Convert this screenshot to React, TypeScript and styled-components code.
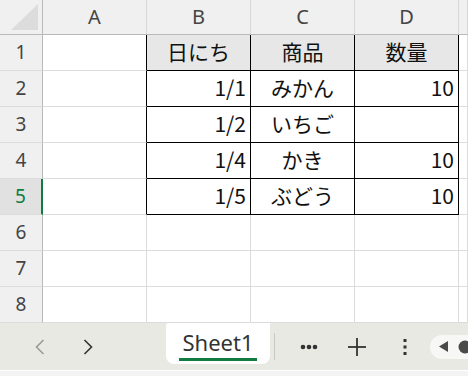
import styled, { createGlobalStyle } from "styled-components";

const GlobalStyle = createGlobalStyle`
  html, body {
    margin: 0;
    padding: 0;
    background: #ffffff;
    overflow: hidden;
  }
  body {
    width: 468px;
    height: 376px;
    font-family: "Noto Sans CJK JP", "Noto Sans", sans-serif;
  }
`;

const Root = styled.div`
  width: 468px;
  height: 376px;
  display: flex;
  flex-direction: column;
  overflow: hidden;
`;

const Grid = styled.div`
  display: grid;
  grid-template-columns: 43px repeat(4, 104px) 1fr;
  grid-template-rows: 35px repeat(8, 36px);
`;

const HeaderCell = styled.div<{ $selected?: boolean }>`
  box-sizing: border-box;
  display: flex;
  align-items: center;
  justify-content: center;
  background: ${(p) => (p.$selected ? "#e1e1e1" : "#f0f0f0")};
  border-right: 1px solid #d6d6d6;
  border-bottom: 1px solid #b9b9b9;
  color: #444444;
  font-family: "Noto Sans", "Liberation Sans", sans-serif;
  font-size: 20px;
  padding-bottom: 2px;
`;

const RowHead = styled.div<{ $selected?: boolean }>`
  box-sizing: border-box;
  display: flex;
  align-items: center;
  justify-content: center;
  background: ${(p) => (p.$selected ? "#e1e1e1" : "#f0f0f0")};
  border-right: ${(p) => (p.$selected ? "2px solid #107c41" : "1px solid #b9b9b9")};
  border-bottom: 1px solid #dcdcdc;
  color: ${(p) => (p.$selected ? "#107c41" : "#444444")};
  font-family: "Noto Sans", "Liberation Sans", sans-serif;
  font-size: 19px;
  padding-bottom: 2px;
`;

const Corner = styled(HeaderCell)`
  border-right: 1px solid #b9b9b9;
  padding: 0;
`;

const Cell = styled.div<{
  $align?: "left" | "center" | "right";
  $fill?: string;
  $right?: string;
  $bottom?: string;
}>`
  box-sizing: border-box;
  display: flex;
  align-items: center;
  justify-content: ${(p) =>
    p.$align === "right" ? "flex-end" : p.$align === "center" ? "center" : "flex-start"};
  padding: 0 4px 3px 4px;
  background: ${(p) => p.$fill || "#ffffff"};
  border-right: 1px solid ${(p) => p.$right || "#dcdcdc"};
  border-bottom: 1px solid ${(p) => p.$bottom || "#dcdcdc"};
  color: #111111;
  font-size: 21px;
  white-space: nowrap;
`;

const TabBar = styled.div`
  display: flex;
  align-items: center;
  height: 47px;
  padding-left: 16px;
  background: #e9e9e3;
`;

const IconButton = styled.div<{ $color?: string }>`
  width: 48px;
  height: 47px;
  display: flex;
  align-items: center;
  justify-content: center;
  color: ${(p) => p.$color || "#333333"};
  flex-shrink: 0;
`;

const SheetTab = styled.div`
  align-self: flex-start;
  box-sizing: border-box;
  width: 104px;
  height: 41px;
  margin-left: 54px;
  background: #ffffff;
  border-radius: 3px 0 8px 8px;
  display: flex;
  flex-direction: column;
  align-items: center;
  padding-top: 5px;
  flex-shrink: 0;
`;

const TabLabel = styled.span`
  font-family: "Noto Sans", "Open Sans", sans-serif;
  font-size: 22px;
  line-height: 28px;
  color: #333333;
`;

const TabUnderline = styled.span`
  display: block;
  width: 78px;
  height: 3px;
  margin-top: 2px;
  background: #107c41;
`;

const Divider = styled.div`
  width: 1px;
  height: 27px;
  margin: 0 10px 0 4px;
  background: #c9c9c4;
  flex-shrink: 0;
`;

const ScrollPill = styled.div`
  display: flex;
  align-items: center;
  gap: 10px;
  height: 24px;
  margin-left: 1px;
  padding-left: 9px;
  width: 60px;
  flex-shrink: 0;
  border-radius: 12px 0 0 12px;
  background: #f7f7f5;
  color: #4a4a4a;
`;

const BottomStrip = styled.div`
  height: 6px;
  border-top: 1px solid #ffffff;
  background: #f3f3f3;
`;

type CellData = { text: string; align: "left" | "center" | "right" };

const TABLE: CellData[][] = [
  [
    { text: "日にち", align: "center" },
    { text: "商品", align: "center" },
    { text: "数量", align: "center" },
  ],
  [
    { text: "1/1", align: "right" },
    { text: "みかん", align: "center" },
    { text: "10", align: "right" },
  ],
  [
    { text: "1/2", align: "right" },
    { text: "いちご", align: "center" },
    { text: "", align: "right" },
  ],
  [
    { text: "1/4", align: "right" },
    { text: "かき", align: "center" },
    { text: "10", align: "right" },
  ],
  [
    { text: "1/5", align: "right" },
    { text: "ぶどう", align: "center" },
    { text: "10", align: "right" },
  ],
];

const COLUMNS = ["A", "B", "C", "D", ""];
const SELECTED_ROW = 5;

const App = () => {
  const rows = [1, 2, 3, 4, 5, 6, 7, 8];

  return (
    <Root>
      <GlobalStyle />
      <Grid>
        <Corner>
          <svg width="42" height="34" viewBox="0 0 42 34">
            <polygon points="11,30 38,30 38,4" fill="#dcdcdc" />
          </svg>
        </Corner>
        {COLUMNS.map((c, i) => (
          <HeaderCell key={"h" + i}>{c}</HeaderCell>
        ))}
        {rows.map((r) => {
          const data = TABLE[r - 1];
          return [
            <RowHead key={"r" + r} $selected={r === SELECTED_ROW}>
              {r}
            </RowHead>,
            <Cell key={"a" + r} $right={data ? "#000000" : undefined} />,
            ...[0, 1, 2].map((ci) => (
              <Cell
                key={r + "-" + ci}
                $align={data ? data[ci].align : "left"}
                $fill={r === 1 ? "#e7e7e7" : undefined}
                $right={data ? "#000000" : undefined}
                $bottom={data ? "#000000" : undefined}
              >
                {data ? data[ci].text : ""}
              </Cell>
            )),
            <Cell key={"e" + r} />,
          ];
        })}
      </Grid>
      <TabBar>
        <IconButton $color="#9a9a9a">
          <svg width="10" height="16" viewBox="0 0 10 16">
            <polyline points="8.5,1 1.5,8 8.5,15" fill="none" stroke="currentColor" strokeWidth="1.6" />
          </svg>
        </IconButton>
        <IconButton>
          <svg width="10" height="16" viewBox="0 0 10 16">
            <polyline points="1.5,1 8.5,8 1.5,15" fill="none" stroke="currentColor" strokeWidth="1.6" />
          </svg>
        </IconButton>
        <SheetTab>
          <TabLabel>Sheet1</TabLabel>
          <TabUnderline />
        </SheetTab>
        <Divider />
        <IconButton>
          <svg width="18" height="6" viewBox="0 0 18 6">
            <circle cx="3" cy="3" r="2.3" fill="currentColor" />
            <circle cx="9" cy="3" r="2.3" fill="currentColor" />
            <circle cx="15" cy="3" r="2.3" fill="currentColor" />
          </svg>
        </IconButton>
        <IconButton>
          <svg width="18" height="18" viewBox="0 0 18 18">
            <line x1="9" y1="0" x2="9" y2="18" stroke="currentColor" strokeWidth="1.8" />
            <line x1="0" y1="9" x2="18" y2="9" stroke="currentColor" strokeWidth="1.8" />
          </svg>
        </IconButton>
        <IconButton>
          <svg width="4" height="16" viewBox="0 0 4 16">
            <rect x="0.5" y="0" width="3" height="3" fill="currentColor" />
            <rect x="0.5" y="6.5" width="3" height="3" fill="currentColor" />
            <rect x="0.5" y="13" width="3" height="3" fill="currentColor" />
          </svg>
        </IconButton>
        <ScrollPill>
          <svg width="9" height="11" viewBox="0 0 9 11">
            <polygon points="9,0 9,11 0,5.5" fill="currentColor" />
          </svg>
          <svg width="14" height="14" viewBox="0 0 14 14">
            <circle cx="7" cy="7" r="6.5" fill="currentColor" />
          </svg>
        </ScrollPill>
      </TabBar>
      <BottomStrip />
    </Root>
  );
};

export default App;
